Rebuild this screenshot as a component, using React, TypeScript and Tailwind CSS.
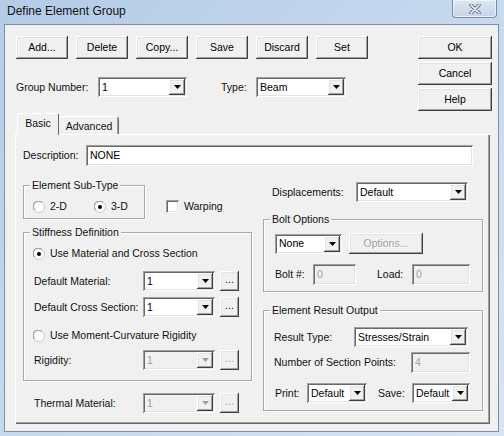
import type { ReactNode } from 'react';

const raised =
  'shadow-[inset_-1px_-1px_#404040,inset_1px_1px_#ffffff,inset_-2px_-2px_#a0a0a0,inset_2px_2px_#e3e3e3]';
const sunken =
  'shadow-[inset_1px_1px_#a0a0a0,inset_-1px_-1px_#ffffff,inset_2px_2px_#696969,inset_-2px_-2px_#e3e3e3]';

function Btn({ className = '', children, disabled }: { className?: string; children: ReactNode; disabled?: boolean }) {
  return (
    <div
      className={`${raised} bg-[#f0f0f0] flex items-center justify-center shrink-0 ${
        disabled ? 'text-[#a0a0a0] [text-shadow:1px_1px_#ffffff]' : 'text-black'
      } ${className}`}
    >
      {children}
    </div>
  );
}

function Combo({ className = '', value, disabled }: { className?: string; value: string; disabled?: boolean }) {
  return (
    <div
      className={`${sunken} flex items-stretch shrink-0 ${
        disabled ? 'bg-[#f0f0f0] text-[#a0a0a0]' : 'bg-white text-black'
      } ${className}`}
    >
      <span className="flex-1 pl-[4px] flex items-center">{value}</span>
      <div className={`${raised} my-[2px] mr-[2px] w-[16px] bg-[#f0f0f0] flex items-center justify-center`}>
        <svg width="7" height="4" viewBox="0 0 7 4">
          <path d="M0 0h7L3.5 4z" fill={disabled ? '#a0a0a0' : '#000000'} />
        </svg>
      </div>
    </div>
  );
}

function Field({ className = '', value, disabled }: { className?: string; value: string; disabled?: boolean }) {
  return (
    <div
      className={`${sunken} flex items-center pl-[4px] shrink-0 ${
        disabled ? 'bg-[#f0f0f0] text-[#a0a0a0]' : 'bg-white text-black'
      } ${className}`}
    >
      {value}
    </div>
  );
}

function Radio({ checked }: { checked?: boolean }) {
  return (
    <svg width="12" height="12" viewBox="0 0 12 12" className="shrink-0">
      <circle cx="6" cy="6" r="5.5" fill="#ffffff" stroke="#c8c8c8" />
      <path d="M1.5 9A5 5 0 0 1 9 1.5" fill="none" stroke="#8a8a8a" />
      {checked && <circle cx="6" cy="6" r="2" fill="#000000" />}
    </svg>
  );
}

function Group({ className = '', title, children }: { className?: string; title: string; children: ReactNode }) {
  return (
    <div className={`border border-[#a9a9a9] shadow-[inset_1px_1px_#ffffff,1px_1px_#ffffff] flex flex-col ${className}`}>
      <div className="-mt-[7px] ml-[6px] px-[2px] w-fit bg-[#f0f0f0] leading-[13px]">{title}</div>
      {children}
    </div>
  );
}

export default function App() {
  return (
    <div className="w-[504px] h-[436px] flex flex-col overflow-hidden whitespace-nowrap bg-gradient-to-br from-[#b4cbe6] via-[#c6d9ef] to-[#d6e4f3] font-['Liberation_Sans',Arial,sans-serif] text-[10.5px] leading-[13px] text-[#111111]">
      {/* Title bar */}
      <div className="h-[24px] flex items-start justify-between pl-[7px] pr-[7px] shrink-0">
        <span className="mt-[4px] text-[12px] leading-[14px]">Define Element Group</span>
        <div className="w-[45px] h-[18px] rounded-b-[4px] border border-t-0 border-[#7a8aa4] bg-gradient-to-b from-[#dde7f3] to-[#c5d4e8] shadow-[inset_0_0_0_1px_#eef3fa] flex items-center justify-center">
          <svg width="12" height="10" viewBox="0 0 12 10">
            <path d="M2 1l8 8M10 1L2 9" stroke="#5d6b82" strokeWidth="3.4" strokeLinecap="round" />
            <path d="M2 1l8 8M10 1L2 9" stroke="#ffffff" strokeWidth="1.6" strokeLinecap="round" />
          </svg>
        </div>
      </div>

      {/* Client area */}
      <div className="flex-1 ml-[4px] mr-[5px] mb-[4px] border border-[#7f8ea5] bg-[#f0f0f0] flex flex-col">
        {/* Top area */}
        <div className="flex pt-[11px] pl-[11px] pr-[6px]">
          <div className="flex flex-col">
            <div className="flex gap-[8px]">
              <Btn className="w-[52px] h-[23px]">Add...</Btn>
              <Btn className="w-[52px] h-[23px]">Delete</Btn>
              <Btn className="w-[52px] h-[23px]">Copy...</Btn>
              <Btn className="w-[52px] h-[23px]">Save</Btn>
              <Btn className="w-[52px] h-[23px]">Discard</Btn>
              <Btn className="w-[52px] h-[23px]">Set</Btn>
            </div>
            <div className="flex items-center mt-[18px]">
              <span className="w-[82px]">Group Number:</span>
              <Combo className="w-[89px] h-[20px]" value="1" />
              <span className="ml-[34px] w-[35px]">Type:</span>
              <Combo className="w-[90px] h-[20px]" value="Beam" />
            </div>
          </div>
          <div className="ml-auto flex flex-col gap-[3px]">
            <Btn className="w-[74px] h-[23px]">OK</Btn>
            <Btn className="w-[74px] h-[23px]">Cancel</Btn>
            <Btn className="w-[74px] h-[23px]">Help</Btn>
          </div>
        </div>

        {/* Tabs */}
        <div className="ml-[10px] mt-[2px] flex flex-col">
          <div className="flex items-end h-[21px] pl-[2px]">
            <div className="relative z-10 h-[22px] -mb-[1px] w-[42px] bg-[#f0f0f0] shadow-[inset_1px_1px_#ffffff,inset_-1px_0_#696969] rounded-t-[2px] flex justify-center pt-[4px]">
              Basic
            </div>
            <div className="h-[18px] w-[60px] bg-[#f0f0f0] shadow-[inset_0_1px_#ffffff,inset_-1px_0_#696969,inset_-2px_0_#a0a0a0] rounded-t-[2px] flex justify-center pt-[4px]">
              Advanced
            </div>
          </div>

          {/* Panel */}
          <div className="w-[475px] h-[290px] shadow-[inset_1px_1px_#ffffff,inset_-1px_-1px_#696969,inset_-2px_-2px_#a0a0a0] flex flex-col pl-[8px]">
            <div className="flex items-center mt-[11px]">
              <span className="w-[63px]">Description:</span>
              <Field className="w-[387px] h-[21px]" value="NONE" />
            </div>

            <div className="flex mt-[12px]">
              {/* Left column */}
              <div className="w-[228px] flex flex-col">
                <div className="flex mt-[7px]">
                  <Group className="w-[122px] h-[34px]" title="Element Sub-Type">
                    <div className="flex items-center mt-[8px] pl-[9px]">
                      <Radio />
                      <span className="ml-[5px]">2-D</span>
                      <span className="ml-[27px]"><Radio checked /></span>
                      <span className="ml-[5px]">3-D</span>
                    </div>
                  </Group>
                  <div className="flex items-center ml-[21px] mt-[15px] h-[13px]">
                    <div className={`${sunken} w-[13px] h-[13px] bg-white`} />
                    <span className="ml-[5px]">Warping</span>
                  </div>
                </div>

                <Group className="w-[229px] h-[149px] mt-[13px]" title="Stiffness Definition">
                  <div className="flex items-center mt-[8px] pl-[9px]">
                    <Radio checked />
                    <span className="ml-[5px]">Use Material and Cross Section</span>
                  </div>
                  <div className="flex items-center mt-[11px] pl-[10px]">
                    <span className="w-[109px]">Default Material:</span>
                    <Combo className="w-[72px] h-[20px]" value="1" />
                    <Btn className="ml-[5px] w-[19px] h-[20px] pb-[4px]">...</Btn>
                  </div>
                  <div className="flex items-center mt-[6px] pl-[10px]">
                    <span className="w-[109px]">Default Cross Section:</span>
                    <Combo className="w-[72px] h-[20px]" value="1" />
                    <Btn className="ml-[5px] w-[19px] h-[20px] pb-[4px]">...</Btn>
                  </div>
                  <div className="flex items-center mt-[12px] pl-[9px]">
                    <Radio />
                    <span className="ml-[5px]">Use Moment-Curvature Rigidity</span>
                  </div>
                  <div className="flex items-center mt-[8px] pl-[10px]">
                    <span className="w-[109px]">Rigidity:</span>
                    <Combo className="w-[72px] h-[20px]" value="1" disabled />
                    <Btn className="ml-[5px] w-[19px] h-[20px] pb-[4px]" disabled>...</Btn>
                  </div>
                </Group>

                <div className="flex items-center mt-[12px] pl-[11px]">
                  <span className="w-[109px]">Thermal Material:</span>
                  <Combo className="w-[72px] h-[20px]" value="1" disabled />
                  <Btn className="ml-[5px] w-[19px] h-[20px] pb-[4px]" disabled>...</Btn>
                </div>
              </div>

              {/* Right column */}
              <div className="ml-[12px] w-[220px] flex flex-col">
                <div className="flex items-center mt-[4px] pl-[9px]">
                  <span className="w-[84px]">Displacements:</span>
                  <Combo className="w-[112px] h-[20px]" value="Default" />
                </div>

                <Group className="w-[220px] h-[73px] mt-[17px]" title="Bolt Options">
                  <div className="flex items-center mt-[7px] pl-[11px]">
                    <Combo className="w-[67px] h-[20px]" value="None" />
                    <Btn className="ml-[7px] w-[74px] h-[21px]" disabled>
                      Options...
                    </Btn>
                  </div>
                  <div className="flex items-center mt-[10px] pl-[11px]">
                    <span className="w-[38px]">Bolt #:</span>
                    <Field className="w-[43px] h-[21px]" value="0" disabled />
                    <span className="ml-[21px] w-[35px]">Load:</span>
                    <Field className="w-[58px] h-[21px]" value="0" disabled />
                  </div>
                </Group>

                <Group className="w-[220px] h-[101px] mt-[18px]" title="Element Result Output">
                  <div className="flex items-center mt-[10px] pl-[10px]">
                    <span className="w-[80px]">Result Type:</span>
                    <Combo className="w-[114px] h-[20px]" value="Stresses/Strain" />
                  </div>
                  <div className="flex items-center mt-[5px] pl-[10px]">
                    <span className="w-[137px]">Number of Section Points:</span>
                    <Field className="w-[59px] h-[21px]" value="4" disabled />
                  </div>
                  <div className="flex items-center mt-[10px] pl-[11px]">
                    <span className="w-[32px]">Print:</span>
                    <Combo className="w-[60px] h-[20px]" value="Default" />
                    <span className="ml-[11px] w-[34px]">Save:</span>
                    <Combo className="w-[58px] h-[20px]" value="Default" />
                  </div>
                </Group>
              </div>
            </div>
          </div>
        </div>
      </div>
    </div>
  );
}
